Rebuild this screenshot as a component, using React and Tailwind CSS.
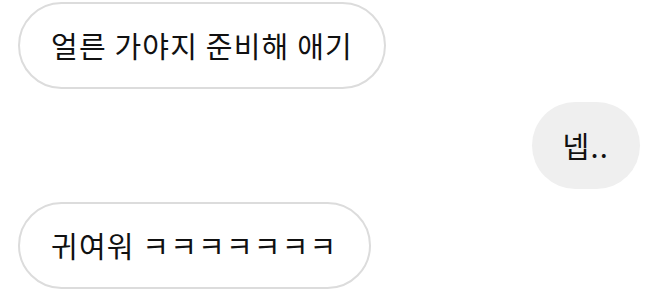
import React from 'react';

const Bubble = ({ children, mine }) => (
  <div
    className={
      mine
        ? 'h-[87px] px-[31px] flex items-center rounded-full bg-[#efefef] text-[29px] tracking-[1.2px] text-[#111]'
        : 'h-[87px] px-[31px] flex items-center rounded-full border-2 border-[#dcdcdc] bg-white text-[29px] tracking-[1.2px] text-[#111]'
    }
  >
    {children}
  </div>
);

const App = () => {
  return (
    <div
      className="w-[657px] h-[295px] bg-white overflow-hidden pt-[2px] pl-[18px] pr-[17px] flex flex-col gap-[13px]"
      style={{ fontFamily: '"Noto Sans CJK KR", "Noto Sans", sans-serif' }}
    >
      <div className="flex justify-start">
        <Bubble>얼른 가야지 준비해 애기</Bubble>
      </div>
      <div className="flex justify-end">
        <Bubble mine>넵..</Bubble>
      </div>
      <div className="flex justify-start">
        <Bubble>귀여워 ㅋㅋㅋㅋㅋㅋㅋ</Bubble>
      </div>
    </div>
  );
};

export default App;
